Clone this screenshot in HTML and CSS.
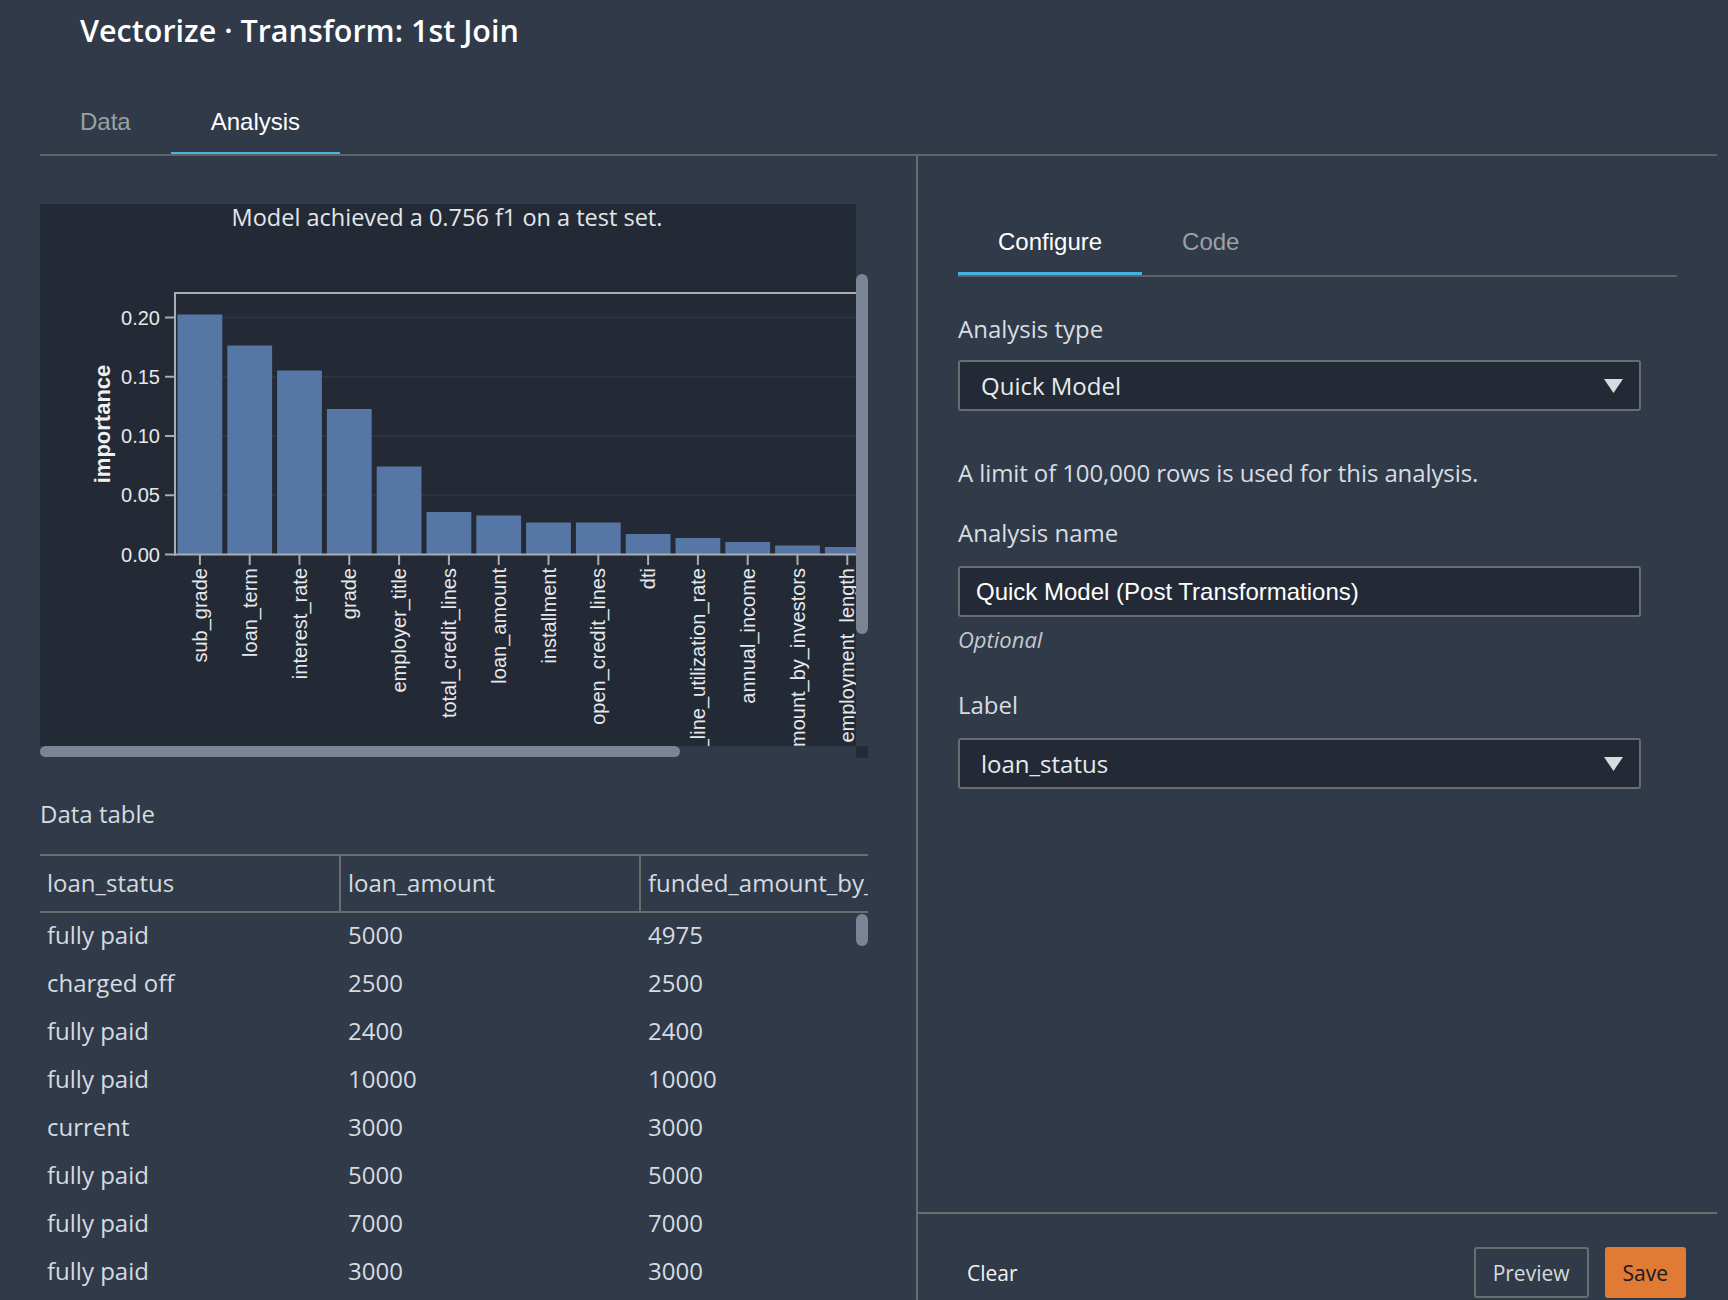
FILE: index.html
```html
<!DOCTYPE html>
<html lang="en">
<head>
<meta charset="utf-8">
<title>Vectorize · Transform: 1st Join</title>
<link rel="stylesheet" href="styles.css">
</head>
<body>
<div class="app">
  <h1 class="page-title">Vectorize · Transform: 1st Join</h1>
  <nav class="tabs main-tabs">
    <div class="tab">Data</div>
    <div class="tab active">Analysis</div>
  </nav>
  <div class="main">
    <section class="left">
      <div class="chart-wrap">
        <div class="chart-canvas">
          <div class="chart-title">Model achieved a 0.756 f1 on a test set.</div>
          <svg class="chart-svg" width="816" height="513" viewBox="0 29 816 513">
            <g class="grid">
              <line x1="136" y1="113.5" x2="816" y2="113.5"/>
              <line x1="136" y1="172.75" x2="816" y2="172.75"/>
              <line x1="136" y1="232" x2="816" y2="232"/>
              <line x1="136" y1="291.25" x2="816" y2="291.25"/>
            </g>
            <g class="bars">
              <rect x="137.5" y="110.5" width="44.8" height="240"/>
              <rect x="187.3" y="141.5" width="44.8" height="209"/>
              <rect x="237.1" y="166.5" width="44.8" height="184"/>
              <rect x="286.9" y="205" width="44.8" height="145.5"/>
              <rect x="336.7" y="262.5" width="44.8" height="88"/>
              <rect x="386.5" y="308" width="44.8" height="42.5"/>
              <rect x="436.3" y="311.5" width="44.8" height="39"/>
              <rect x="486.1" y="318.5" width="44.8" height="32"/>
              <rect x="535.9" y="318.5" width="44.8" height="32"/>
              <rect x="585.7" y="330" width="44.8" height="20.5"/>
              <rect x="635.5" y="334" width="44.8" height="16.5"/>
              <rect x="685.3" y="338" width="44.8" height="12.5"/>
              <rect x="735.1" y="341.5" width="44.8" height="9"/>
              <rect x="784.9" y="343" width="44.8" height="7.5"/>
            </g>
            <g class="axis">
              <line x1="135" y1="89" x2="816" y2="89"/>
              <line x1="135" y1="88" x2="135" y2="351.5"/>
              <line x1="134" y1="350.5" x2="816" y2="350.5"/>
              <line x1="125" y1="113.5" x2="135" y2="113.5"/>
              <line x1="125" y1="172.75" x2="135" y2="172.75"/>
              <line x1="125" y1="232" x2="135" y2="232"/>
              <line x1="125" y1="291.25" x2="135" y2="291.25"/>
              <line x1="125" y1="350.5" x2="135" y2="350.5"/>
              <line x1="159.9" y1="351" x2="159.9" y2="361"/>
              <line x1="209.7" y1="351" x2="209.7" y2="361"/>
              <line x1="259.5" y1="351" x2="259.5" y2="361"/>
              <line x1="309.3" y1="351" x2="309.3" y2="361"/>
              <line x1="359.1" y1="351" x2="359.1" y2="361"/>
              <line x1="408.9" y1="351" x2="408.9" y2="361"/>
              <line x1="458.7" y1="351" x2="458.7" y2="361"/>
              <line x1="508.5" y1="351" x2="508.5" y2="361"/>
              <line x1="558.3" y1="351" x2="558.3" y2="361"/>
              <line x1="608.1" y1="351" x2="608.1" y2="361"/>
              <line x1="657.9" y1="351" x2="657.9" y2="361"/>
              <line x1="707.7" y1="351" x2="707.7" y2="361"/>
              <line x1="757.5" y1="351" x2="757.5" y2="361"/>
              <line x1="807.3" y1="351" x2="807.3" y2="361"/>
            </g>
            <g class="y-labels">
              <text x="120" y="113.5">0.20</text>
              <text x="120" y="172.75">0.15</text>
              <text x="120" y="232">0.10</text>
              <text x="120" y="291.25">0.05</text>
              <text x="120" y="350.5">0.00</text>
            </g>
            <text class="axis-title" transform="translate(62,220) rotate(-90)">importance</text>
            <g class="x-labels">
              <text transform="translate(159.9,364) rotate(-90)">sub_grade</text>
              <text transform="translate(209.7,364) rotate(-90)">loan_term</text>
              <text transform="translate(259.5,364) rotate(-90)">interest_rate</text>
              <text transform="translate(309.3,364) rotate(-90)">grade</text>
              <text transform="translate(359.1,364) rotate(-90)">employer_title</text>
              <text transform="translate(408.9,364) rotate(-90)">total_credit_lines</text>
              <text transform="translate(458.7,364) rotate(-90)">loan_amount</text>
              <text transform="translate(508.5,364) rotate(-90)">installment</text>
              <text transform="translate(558.3,364) rotate(-90)">open_credit_lines</text>
              <text transform="translate(608.1,364) rotate(-90)">dti</text>
              <text transform="translate(657.9,364) rotate(-90)">revolving_line_utilization_rate</text>
              <text transform="translate(707.7,364) rotate(-90)">annual_income</text>
              <text transform="translate(757.5,364) rotate(-90)">funded_amount_by_investors</text>
              <text transform="translate(807.3,364) rotate(-90)">employment_length</text>
            </g>
          </svg>
        </div>
        <div class="thumb chart-vthumb"></div>
        <div class="thumb chart-hthumb"></div>
        <div class="corner"></div>
      </div>

      <h2 class="section-title">Data table</h2>
      <div class="table-wrap">
        <table class="data-table">
          <colgroup>
            <col class="col-a"><col class="col-b"><col class="col-c">
          </colgroup>
          <thead>
            <tr><th>loan_status</th><th>loan_amount</th><th>funded_amount_by_investors</th></tr>
          </thead>
          <tbody>
            <tr><td>fully paid</td><td>5000</td><td>4975</td></tr>
            <tr><td>charged off</td><td>2500</td><td>2500</td></tr>
            <tr><td>fully paid</td><td>2400</td><td>2400</td></tr>
            <tr><td>fully paid</td><td>10000</td><td>10000</td></tr>
            <tr><td>current</td><td>3000</td><td>3000</td></tr>
            <tr><td>fully paid</td><td>5000</td><td>5000</td></tr>
            <tr><td>fully paid</td><td>7000</td><td>7000</td></tr>
            <tr><td>fully paid</td><td>3000</td><td>3000</td></tr>
            <tr><td>fully paid</td><td>5600</td><td>5600</td></tr>
          </tbody>
        </table>
        <div class="thumb table-vthumb"></div>
      </div>
    </section>

    <section class="right">
      <div class="config">
        <nav class="tabs sub-tabs">
          <div class="tab active">Configure</div>
          <div class="tab">Code</div>
        </nav>

        <div class="field-label first">Analysis type</div>
        <div class="select">
          <span>Quick Model</span>
          <svg class="caret" width="19" height="14" viewBox="0 0 19 14"><polygon points="0,0 19,0 9.5,14"/></svg>
        </div>

        <p class="note">A limit of 100,000 rows is used for this analysis.</p>

        <div class="field-label name-label">Analysis name</div>
        <div class="input">Quick Model (Post Transformations)</div>
        <div class="hint">Optional</div>

        <div class="field-label label-label">Label</div>
        <div class="select">
          <span>loan_status</span>
          <svg class="caret" width="19" height="14" viewBox="0 0 19 14"><polygon points="0,0 19,0 9.5,14"/></svg>
        </div>
      </div>
      <footer class="footer">
        <button class="btn btn-clear" type="button">Clear</button>
        <button class="btn btn-preview" type="button">Preview</button>
        <button class="btn btn-save" type="button">Save</button>
      </footer>
    </section>
  </div>
</div>
</body>
</html>
```

FILE: styles.css
```css
html, body {
  margin: 0;
  height: 1300px;
  overflow: hidden;
  background: #303a48;
}

.app {
  height: 1300px;
  box-sizing: border-box;
  padding: 0 11px 0 40px;
  display: flex;
  flex-direction: column;
  font-family: "Open Sans", "Noto Sans", sans-serif;
  color: #d5dbe0;
}

.page-title {
  margin: 12px 0 44px;
  padding-left: 40px;
  font-size: 30.5px;
  line-height: 36px;
  font-weight: 600;
  color: #ffffff;
}

.tabs {
  display: flex;
  font-family: "Liberation Sans", Arial, sans-serif;
  font-size: 24px;
  line-height: 28px;
}

.main-tabs {
  border-bottom: 2px solid #5f6266;
}

.tab {
  padding: 16px 40px 16px;
  color: #9aa0a6;
  border-bottom: 2px solid transparent;
}

.tab.active {
  color: #ffffff;
  border-bottom-color: #44b4de;
}

.main {
  flex: 1;
  min-height: 0;
  display: grid;
  grid-template-columns: 876px 1fr;
}

/* ---------- left column ---------- */
.left {
  padding-top: 48px;
  overflow: hidden;
}

.chart-wrap {
  position: relative;
  width: 828px;
  height: 554px;
}

.chart-canvas {
  display: flow-root;
  width: 816px;
  height: 542px;
  background: #232a35;
}

.chart-title {
  height: 32px;
  margin-top: -3px;
  padding-right: 2px;
  font-size: 23.5px;
  line-height: 32px;
  text-align: center;
  color: #e3e6e9;
  white-space: nowrap;
}

.chart-svg {
  display: block;
  overflow: hidden;
}

.grid line {
  stroke: #2d3440;
  stroke-width: 2;
}

.bars rect {
  fill: #5677a5;
}

.axis line {
  stroke: #a9adb2;
  stroke-width: 2;
}

.y-labels text {
  font-family: "Liberation Sans", Arial, sans-serif;
  font-size: 20px;
  fill: #e6e8ea;
  text-anchor: end;
  dominant-baseline: central;
}

.axis-title {
  font-family: "Liberation Sans", Arial, sans-serif;
  font-size: 22px;
  font-weight: 700;
  fill: #eef0f2;
  text-anchor: middle;
  dominant-baseline: central;
}

.x-labels text {
  font-family: "Liberation Sans", Arial, sans-serif;
  font-size: 20px;
  fill: #e6e8ea;
  text-anchor: end;
  dominant-baseline: central;
}

.thumb {
  position: absolute;
  background: #7b8494;
  border-radius: 6px;
}

.chart-vthumb {
  left: 816px;
  top: 70px;
  width: 12px;
  height: 360px;
}

.chart-hthumb {
  left: 0;
  top: 542px;
  width: 640px;
  height: 11px;
}

.corner {
  position: absolute;
  left: 816px;
  top: 542px;
  width: 12px;
  height: 12px;
  background: #232a35;
}

.section-title {
  margin: 40px 0 24px;
  font-size: 24px;
  line-height: 32px;
  font-weight: 400;
  color: #d5dbe0;
}

.table-wrap {
  position: relative;
  width: 828px;
  overflow: hidden;
}

.data-table {
  table-layout: fixed;
  width: 899px;
  border-collapse: separate;
  border-spacing: 0;
  font-size: 24px;
  color: #d5dbe0;
}

.col-a { width: 299px; }
.col-b { width: 300px; }
.col-c { width: 300px; }

.data-table th {
  box-sizing: border-box;
  height: 59px;
  padding: 0 0 2px 7px;
  text-align: left;
  font-weight: 400;
  white-space: nowrap;
  overflow: hidden;
  border-top: 2px solid #6a6d70;
  border-bottom: 2px solid #6a6d70;
}

.data-table th + th {
  border-left: 2px solid #6a6d70;
}

.data-table td {
  box-sizing: border-box;
  height: 48px;
  padding: 0 0 5px 7px;
  white-space: nowrap;
}

.data-table td + td {
  padding-left: 9px;
}

.table-vthumb {
  right: 0;
  top: 60px;
  width: 12px;
  height: 32px;
}

/* ---------- right column ---------- */
.right {
  border-left: 2px solid #6a6d70;
  display: flex;
  flex-direction: column;
  min-height: 0;
}

.config {
  flex: 1;
  padding: 0 40px;
}

.sub-tabs {
  margin-top: 56px;
  border-bottom: 2px solid #5f6266;
}

.sub-tabs .tab {
  border-bottom-width: 3px;
}

.field-label {
  margin: 28px 0 17px;
  font-size: 24px;
  line-height: 32px;
  color: #d8dde2;
}

.field-label.first {
  margin-top: 36px;
  margin-bottom: 15px;
}

.field-label.label-label {
  margin-top: 36px;
  margin-bottom: 17px;
}

.select,
.input {
  width: 683px;
  height: 51px;
  box-sizing: border-box;
  border: 2px solid #6a6d70;
  border-radius: 3px;
  background: #232a35;
  display: flex;
  align-items: center;
  font-size: 24px;
}

.select {
  justify-content: space-between;
  padding: 0 16px 0 21px;
  color: #e8eaed;
}

.caret {
  display: block;
  fill: #d8dcdf;
}

.input {
  padding-left: 16px;
  font-family: "Liberation Sans", Arial, sans-serif;
  color: #ffffff;
}

.note {
  margin: 46px 0 0;
  font-size: 24px;
  line-height: 32px;
  letter-spacing: -0.1px;
  color: #d8dde2;
}

.hint {
  margin-top: 8px;
  font-size: 22px;
  line-height: 28px;
  font-style: italic;
  color: #c4c9ce;
}

.footer {
  height: 88px;
  box-sizing: border-box;
  border-top: 2px solid #6a6d70;
  padding: 33px 31px 0 40px;
  display: flex;
  align-items: flex-start;
}

.btn {
  height: 51px;
  box-sizing: border-box;
  margin: 0;
  font-family: "Open Sans", sans-serif;
  font-size: 21px;
  font-weight: 500;
  border-radius: 3px;
  display: flex;
  align-items: center;
  cursor: pointer;
}

.btn-clear {
  margin-right: auto;
  padding: 0 9px;
  border: none;
  background: none;
  color: #f2f3f3;
}

.btn-preview {
  margin-right: 16px;
  padding: 0 17px;
  border: 2px solid #6a6d70;
  background: transparent;
  color: #d5dbdb;
}

.btn-save {
  padding: 0 16px;
  border: 2px solid #e07a35;
  background: #e07a35;
  color: #16191f;
}
```
